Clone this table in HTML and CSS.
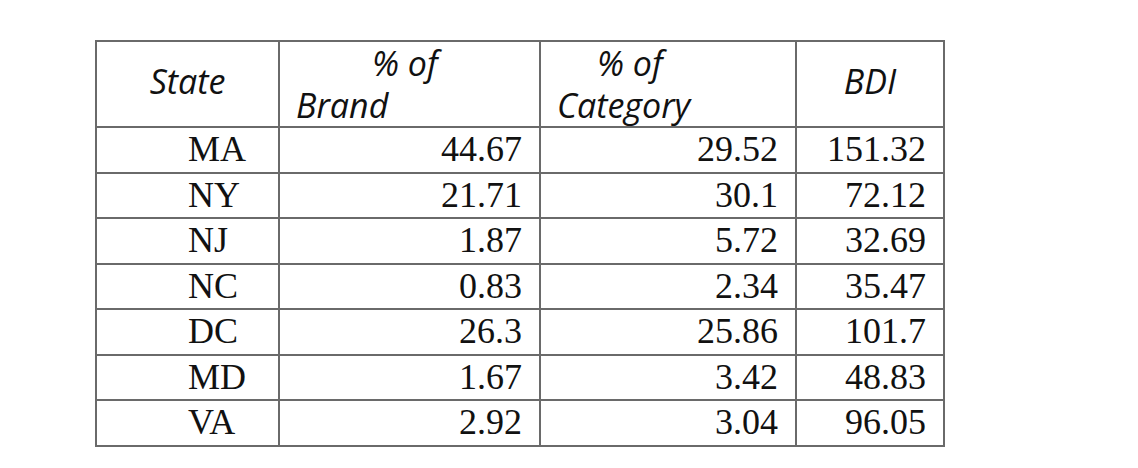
FILE: index.html
```html
<!doctype html>
<html lang="en">
  <head>
    <meta charset="utf-8">
    <link rel="stylesheet" href="styles.css">
  </head>
  <body>
    <div class="page">
      <table class="bdi_table">
        <colgroup>
          <col class="col_state">
          <col class="col_brand">
          <col class="col_cat">
          <col class="col_bdi">
        </colgroup>
        <thead>
          <tr>
            <th class="center">State</th>
            <th>
              <span class="line brand_top">% of</span>
              <span class="line brand_bottom">Brand</span>
            </th>
            <th>
              <span class="line cat_top">% of</span>
              <span class="line cat_bottom">Category</span>
            </th>
            <th class="center">BDI</th>
          </tr>
        </thead>
        <tbody>
          <tr><td class="state">MA</td><td class="num">44.67</td><td class="num">29.52</td><td class="num">151.32</td></tr>
          <tr><td class="state">NY</td><td class="num">21.71</td><td class="num">30.1</td><td class="num">72.12</td></tr>
          <tr><td class="state">NJ</td><td class="num">1.87</td><td class="num">5.72</td><td class="num">32.69</td></tr>
          <tr><td class="state">NC</td><td class="num">0.83</td><td class="num">2.34</td><td class="num">35.47</td></tr>
          <tr><td class="state">DC</td><td class="num">26.3</td><td class="num">25.86</td><td class="num">101.7</td></tr>
          <tr><td class="state">MD</td><td class="num">1.67</td><td class="num">3.42</td><td class="num">48.83</td></tr>
          <tr><td class="state">VA</td><td class="num">2.92</td><td class="num">3.04</td><td class="num">96.05</td></tr>
        </tbody>
      </table>
    </div>
  </body>
</html>
```

FILE: styles.css
```css
body {
  margin: 0;
  background-color: white;
  color: #111;
}

.page {
  padding-top: 40px;
  padding-left: 95px;
}

.bdi_table {
  border-collapse: collapse;
  table-layout: fixed;
  width: 850px;
  font-family: "Liberation Serif", serif;
  font-size: 36px;
}

.col_state { width: 183px; }
.col_brand { width: 261px; }
.col_cat { width: 256px; }
.col_bdi { width: 148px; }

.bdi_table th,
.bdi_table td {
  border: 2px solid #6a6a6a;
  padding: 0;
}

.bdi_table th {
  height: 84px;
  font-family: "Open Sans", sans-serif;
  font-style: italic;
  font-weight: normal;
  font-size: 34px;
  line-height: 42px;
  text-align: left;
  vertical-align: middle;
}

.bdi_table th.center {
  text-align: center;
  height: 78px;
  padding-bottom: 6px;
}

.line {
  display: block;
}

.brand_top { padding-left: 92px; }
.brand_bottom { padding-left: 16px; }
.cat_top { padding-left: 56px; }
.cat_bottom { padding-left: 16px; }

.bdi_table td {
  height: 43.5px;
  line-height: 43.5px;
}

.state {
  padding-left: 91px !important;
}

.num {
  text-align: right;
  padding-right: 17px !important;
}
```
